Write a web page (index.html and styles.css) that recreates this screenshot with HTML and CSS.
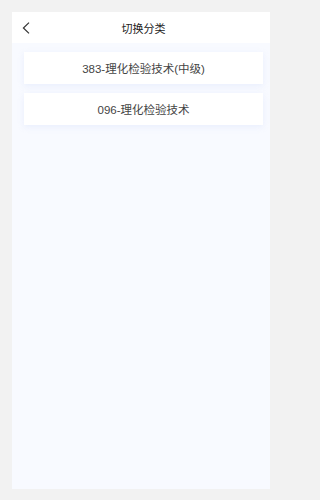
FILE: index.html
```html
<!DOCTYPE html>
<html lang="zh">
<head>
<meta charset="utf-8">
<title>切换分类</title>
<link rel="stylesheet" href="styles.css">
</head>
<body>
<div class="screen">
  <header class="topbar">
    <span class="back">
      <svg width="8" height="12" viewBox="0 0 8 12"><path d="M7 0.6 L1.4 6 L7 11.4" fill="none" stroke="#333" stroke-width="1.2"/></svg>
    </span>
    <h1 class="title">切换分类</h1>
  </header>
  <main class="content">
    <div class="card">383-理化检验技术(中级)</div>
    <div class="card">096-理化检验技术</div>
  </main>
</div>
</body>
</html>
```
FILE: styles.css
```css
html, body {
  margin: 0;
  padding: 0;
  background: #f2f2f2;
  font-family: "Liberation Sans", "Noto Sans CJK SC", sans-serif;
  color: #333;
}
.screen {
  margin: 12px 0 0 12px;
  width: 258px;
  height: 477px;
  display: flex;
  flex-direction: column;
  background: #f8faff;
}
.topbar {
  height: 31px;
  background: #fff;
  display: flex;
  align-items: center;
  position: relative;
  padding-left: 10px;
}
.back {
  display: flex;
  width: 8px;
  height: 12px;
}
.title {
  position: absolute;
  left: 5px;
  right: 0;
  top: 0;
  bottom: 0;
  margin: 0;
  display: flex;
  align-items: center;
  justify-content: center;
  font-size: 11px;
  font-weight: 400;
  color: #222;
  pointer-events: none;
}
.content {
  flex: 1;
  padding: 9px 7px 0 12px;
  display: flex;
  flex-direction: column;
  gap: 9px;
}
.card {
  height: 32px;
  background: #fff;
  display: flex;
  align-items: center;
  justify-content: center;
  font-size: 11.5px;
  color: #444;
  box-shadow: 0 2px 6px rgba(215, 225, 250, 0.45);
}
```
